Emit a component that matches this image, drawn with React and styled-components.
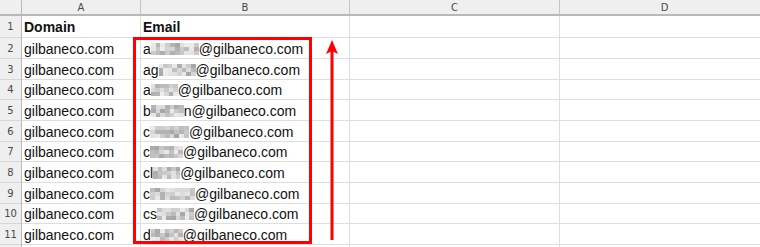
import styled, { createGlobalStyle } from "styled-components";

const GlobalStyle = createGlobalStyle`
	html, body {
		margin: 0;
		padding: 0;
		background: #fff;
	}
	#root {
		height: 247px;
		overflow: hidden;
	}
`;

const COLS = [
	{ label: "A", width: 119 },
	{ label: "B", width: 209 },
	{ label: "C", width: 210 },
	{ label: "D", width: 210 },
];

const ROW_HEIGHTS = [22, 21, 21, 20, 21, 21, 20, 21, 21, 20, 21, 21];

const rows = [
	{ domain: "Domain", head: "Email", bold: true },
	{ domain: "gilbaneco.com", pre: "a", blur: 48 },
	{ domain: "gilbaneco.com", pre: "ag", blur: 37 },
	{ domain: "gilbaneco.com", pre: "a", blur: 27 },
	{ domain: "gilbaneco.com", pre: "b", blur: 33, post: "n" },
	{ domain: "gilbaneco.com", pre: "c", blur: 39 },
	{ domain: "gilbaneco.com", pre: "c", blur: 33 },
	{ domain: "gilbaneco.com", pre: "cl", blur: 27 },
	{ domain: "gilbaneco.com", pre: "c", blur: 45 },
	{ domain: "gilbaneco.com", pre: "cs", blur: 37 },
	{ domain: "gilbaneco.com", pre: "d", blur: 32 },
	{ domain: "", head: "", hideNumber: true },
];

// cheap pseudo random so the mosaic looks the same each run
const shade = (seed, i) => {
	const v = Math.sin(seed * 97.13 + i * 12.9898) * 43758.5453;
	const f = v - Math.floor(v);
	const g = Math.round(150 + f * 85);
	return `rgb(${g},${g},${g})`;
};

function Mosaic({ width, seed }) {
	const cols = Math.ceil(width / 5);
	const cells = [];
	for (let i = 0; i < cols * 3; i++) cells.push(shade(seed, i));
	return (
		<Pixels style={{ width, gridTemplateColumns: `repeat(${cols}, 1fr)` }}>
			{cells.map((c, i) => <i key={i} style={{ background: c }} />)}
		</Pixels>
	);
}

export default function App() {
	return (
		<>
			<GlobalStyle />
			<Sheet
				$cols={COLS.map(c => c.width + "px").join(" ")}
				$rows={ROW_HEIGHTS.map(h => h + "px").join(" ")}
			>
				<Corner />
				{COLS.map(c => <ColHeader key={c.label}>{c.label}</ColHeader>)}

				{rows.map((r, idx) => (
					<Row key={idx}>
						<RowHeader>{r.hideNumber ? "" : idx + 1}</RowHeader>
						<Cell $bold={r.bold}>{r.domain}</Cell>
						<Cell $bold={r.bold}>
							{r.head !== undefined ? r.head : (
								<>
									{r.pre}
									<Mosaic width={r.blur} seed={idx} />
									{r.post}@gilbaneco.com
								</>
							)}
						</Cell>
						<Cell />
						<Cell />
					</Row>
				))}

				<Highlight />
				<Arrow viewBox="0 0 14 202" width="14" height="202">
					<polygon points="7,0 13,14 7,11 1,14" fill="#ff0000" />
					<line x1="7" y1="10" x2="7" y2="200" stroke="#ff0000" strokeWidth="3" />
				</Arrow>
			</Sheet>
		</>
	);
}

const Sheet = styled.div`
	position: relative;
	display: grid;
	grid-template-columns: 22px ${props => props.$cols};
	grid-template-rows: 16px ${props => props.$rows};
	font-family: "Liberation Sans", Arial, sans-serif;
	color: #111;
`;

const Row = styled.div`
	display: contents;
`;

const Corner = styled.div`
	background: #efeff0;
	border-right: 1px solid #b8b8b8;
	border-bottom: 2px solid #b8b8b8;
`;

const ColHeader = styled.div`
	display: flex;
	align-items: center;
	justify-content: center;
	background: #efeff0;
	border-right: 1px solid #c4c4c4;
	border-bottom: 2px solid #b8b8b8;
	font-family: "DejaVu Sans", sans-serif;
	font-size: 10px;
	color: #4a4a4a;
`;

const RowHeader = styled.div`
	display: flex;
	align-items: center;
	justify-content: center;
	background: #efeff0;
	border-right: 1px solid #b8b8b8;
	border-bottom: 1px solid #d6d6d6;
	font-family: "DejaVu Sans", sans-serif;
	font-size: 10px;
	color: #4a4a4a;
`;

const Cell = styled.div`
	display: flex;
	align-items: center;
	padding: 1px 2px 0;
	border-right: 1px solid #dedede;
	border-bottom: 1px solid #dedede;
	font-size: 14px;
	font-weight: ${props => props.$bold ? 700 : 400};
	white-space: nowrap;
	overflow: hidden;
`;

const Pixels = styled.span`
	display: inline-grid;
	grid-template-rows: repeat(3, 4px);
	height: 12px;
	opacity: 0.85;

	i {
		display: block;
	}
`;

const Highlight = styled.div`
	position: absolute;
	left: 133px;
	top: 37px;
	width: 179px;
	height: 207px;
	box-sizing: border-box;
	border: 3px solid #ff0000;
	pointer-events: none;
`;

const Arrow = styled.svg`
	position: absolute;
	left: 325px;
	top: 40px;
`;
